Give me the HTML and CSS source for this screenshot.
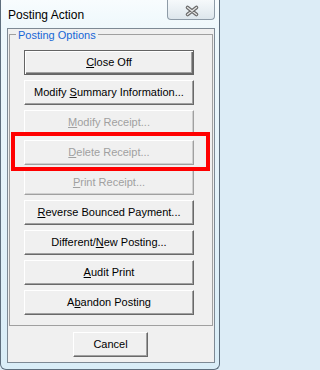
FILE: index.html
```html
<!DOCTYPE html>
<html lang="en">
<head>
<meta charset="utf-8">
<title>Posting Action</title>
<link rel="stylesheet" href="styles.css">
</head>
<body>
<div class="window">
  <div class="titlebar">
    <span class="title">Posting Action</span>
    <button class="close-btn" type="button" aria-label="Close">
      <svg width="46" height="19" viewBox="0 0 46 19">
        <path d="M19.5 7.5 L28.5 14.5 M28.5 7.5 L19.5 14.5" stroke="#6a6a6a" stroke-width="3.6" stroke-linecap="round" fill="none"/>
        <path d="M19.5 7.5 L28.5 14.5 M28.5 7.5 L19.5 14.5" stroke="#e4e4e4" stroke-width="1.3" stroke-linecap="round" fill="none"/>
      </svg>
    </button>
  </div>
  <div class="client">
    <fieldset class="group">
      <legend class="group-label">Posting Options</legend>
      <button class="btn btn-default" type="button"><u>C</u>lose Off</button>
      <button class="btn" type="button">Modify <u>S</u>ummary Information...</button>
      <button class="btn" type="button" disabled><u>M</u>odify Receipt...</button>
      <button class="btn" type="button" disabled><u>D</u>elete Receipt...</button>
      <button class="btn" type="button" disabled><u>P</u>rint Receipt...</button>
      <button class="btn" type="button"><u>R</u>everse Bounced Payment...</button>
      <button class="btn" type="button">Different/<u>N</u>ew Posting...</button>
      <button class="btn" type="button"><u>A</u>udit Print</button>
      <button class="btn" type="button">A<u>b</u>andon Posting</button>
    </fieldset>
    <div class="footer">
      <button class="btn btn-cancel" type="button">Cancel</button>
    </div>
  </div>
  <div class="highlight"></div>
</div>
</body>
</html>
```

FILE: styles.css
```css
html, body {
  margin: 0;
  padding: 0;
  background: #dcecf6;
}

.window {
  position: relative;
  box-sizing: border-box;
  width: 220px;
  height: 370px;
  border: 1px solid #5e6e7d;
  border-top: 0;
  border-radius: 0 0 6px 6px;
  padding: 0 4px 6px 6px;
  display: flex;
  flex-direction: column;
  background: linear-gradient(to bottom, #f8fcfe 0, #eef8fc 28px, #e2f1f9 60%, #d9edf7 100%);
  font-family: "Liberation Sans", Arial, sans-serif;
}

.titlebar {
  height: 28px;
  display: flex;
  justify-content: space-between;
  align-items: flex-start;
  flex: none;
}

.title {
  padding: 8px 0 0 1px;
  font-size: 12px;
  line-height: 14px;
  color: #000;
}

.close-btn {
  box-sizing: border-box;
  width: 48px;
  height: 20px;
  margin: 0;
  padding: 0;
  border: 1px solid #8e9ba7;
  border-top: 0;
  border-radius: 0 0 4px 4px;
  background: linear-gradient(to bottom, #f6f9fb 0, #eaf0f4 50%, #dde6ec 100%);
  display: block;
}

.close-btn svg {
  display: block;
}

.client {
  flex: 1;
  box-sizing: border-box;
  border: 1px solid #7d8994;
  background: #f0f0f0;
  display: flex;
  flex-direction: column;
}

.group {
  margin: -1px 1px 0 1px;
  padding: 9px 0 10px 14px;
  border: 1px solid #a0a0a0;
  min-width: 0;
  display: flex;
  flex-direction: column;
  gap: 5px;
}

.group-label {
  margin-left: -8px;
  padding: 2px 2px 0 2px;
  font-size: 11px;
  line-height: 11px;
  color: #1666d6;
}

.btn {
  box-sizing: border-box;
  display: block;
  width: 170px;
  height: 25px;
  margin: 0;
  padding: 0;
  border: 1px solid;
  border-color: #ffffff #696969 #696969 #ffffff;
  box-shadow: inset -1px -1px 0 #a0a0a0;
  background: #f0f0f0;
  font-family: "Liberation Sans", Arial, sans-serif;
  font-size: 11px;
  line-height: 23px;
  color: #000;
  text-align: center;
  white-space: nowrap;
}

.btn u {
  text-underline-offset: 1px;
}

.btn-default {
  border-color: #646464;
  box-shadow: inset 1px 1px 0 #ffffff, inset -1px -1px 0 #696969, inset -2px -2px 0 #a0a0a0;
}

.btn:disabled {
  color: #a0a0a0;
  border-color: #ffffff #a0a0a0 #a0a0a0 #ffffff;
  box-shadow: inset -1px -1px 0 #cfcfcf;
}

.footer {
  padding: 6px 0 0 65px;
}

.btn-cancel {
  width: 75px;
}

.highlight {
  position: absolute;
  left: 10px;
  top: 132px;
  width: 199px;
  height: 39px;
  box-sizing: border-box;
  border: 4px solid #ff0000;
}
```
